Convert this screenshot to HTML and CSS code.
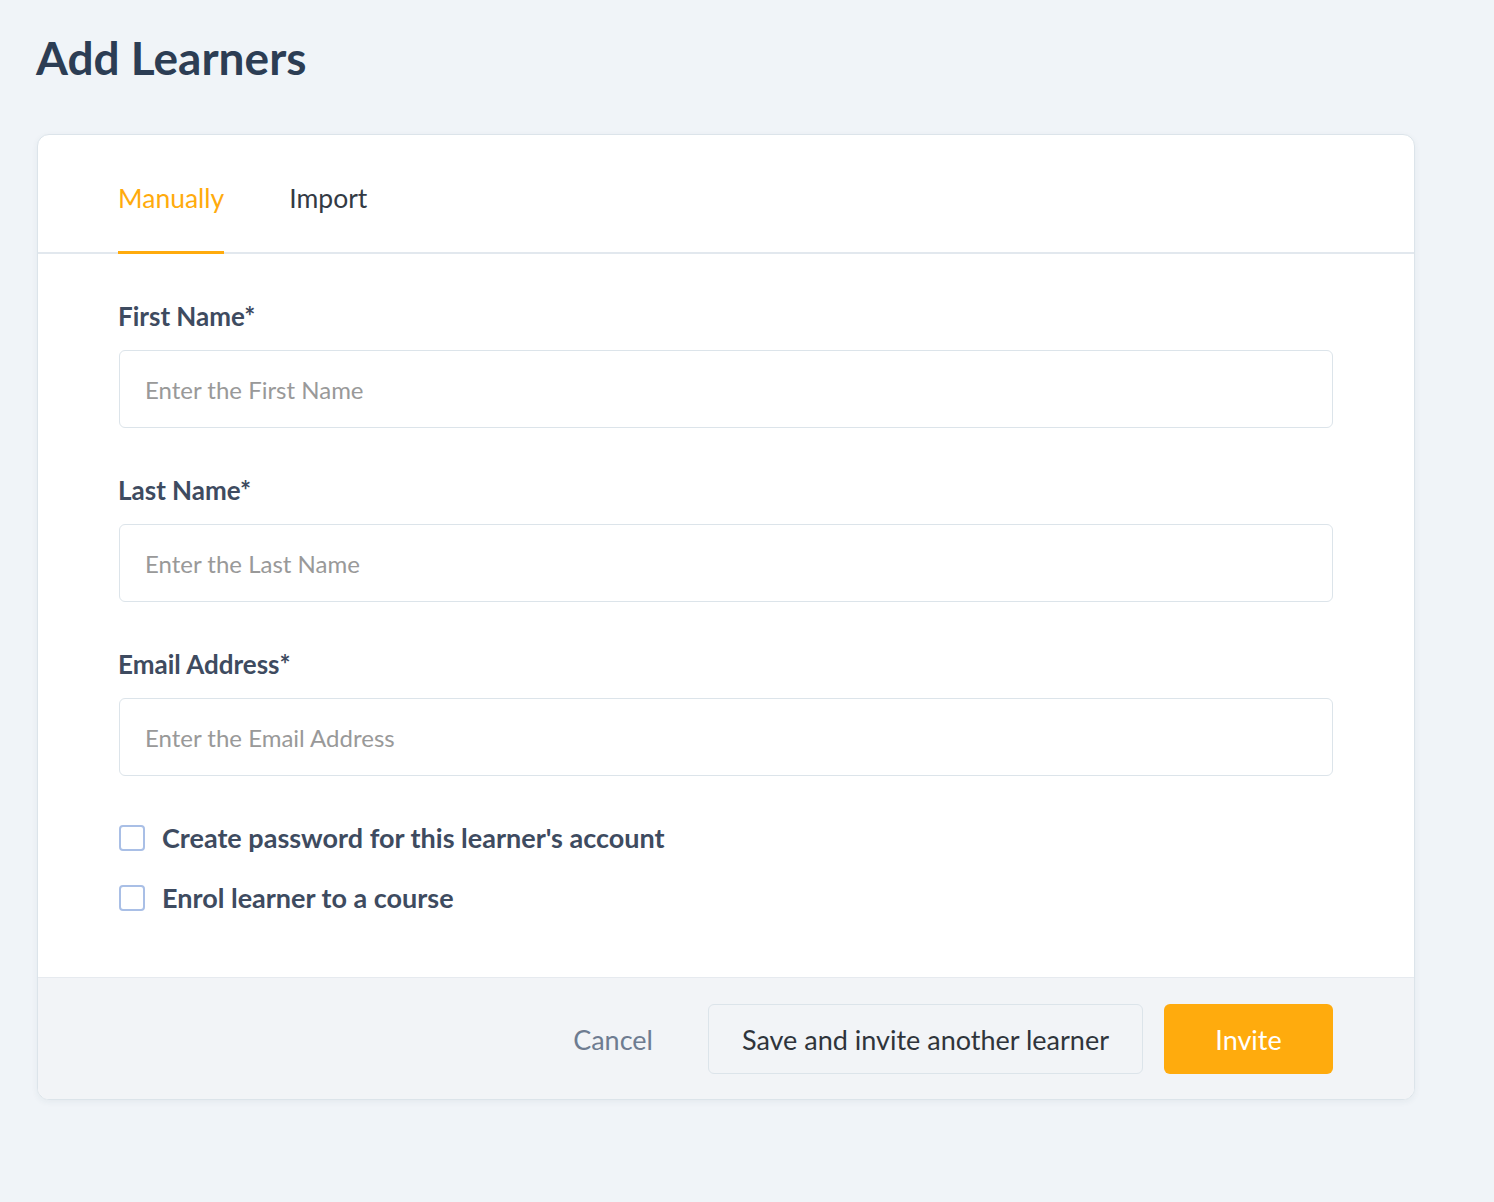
FILE: index.html
```
<!DOCTYPE html>
<html lang="en">
<head>
    <meta charset="UTF-8">
    <title>Add Learners</title>
    <link rel="stylesheet" href="styles.css">
</head>
<body>
    <div class="page">
        <h1 class="page-title">Add Learners</h1>

        <div class="card">
            <div class="tabs">
                <a class="tab active" href="#">Manually</a>
                <a class="tab" href="#">Import</a>
            </div>

            <form class="learner-form">
                <div class="field">
                    <label for="first-name">First Name*</label>
                    <input id="first-name" type="text" placeholder="Enter the First Name">
                </div>
                <div class="field">
                    <label for="last-name">Last Name*</label>
                    <input id="last-name" type="text" placeholder="Enter the Last Name">
                </div>
                <div class="field">
                    <label for="email">Email Address*</label>
                    <input id="email" type="email" placeholder="Enter the Email Address">
                </div>

                <div class="options">
                    <label class="check">
                        <input type="checkbox">
                        <span>Create password for this learner's account</span>
                    </label>
                    <label class="check">
                        <input type="checkbox">
                        <span>Enrol learner to a course</span>
                    </label>
                </div>
            </form>

            <div class="card-footer">
                <button class="btn btn-link" type="button">Cancel</button>
                <button class="btn btn-secondary" type="button">Save and invite another learner</button>
                <button class="btn btn-primary" type="button">Invite</button>
            </div>
        </div>
    </div>
</body>
</html>
```

FILE: styles.css
```
:root {
    --orange: #ffab0d;
    --heading: #2c3d54;
    --label: #3e4b60;
    --border: #dce4ea;
    --footer-bg: #f2f4f7;
    --page-bg: #f0f4f8;
}
body {
    margin: 0;
    background-color: var(--page-bg);
    font-family: 'Lato', 'Noto Sans', sans-serif;
    color: #333a44;
}
.page {
    padding: 30px 37px 60px;
}
.page-title {
    margin: 0 0 48px -1px;
    font-size: 46px;
    line-height: 56px;
    font-weight: 700;
    color: var(--heading);
}
.card {
    width: 1378px;
    box-sizing: border-box;
    background-color: white;
    border: 1px solid var(--border);
    border-radius: 12px;
    box-shadow: 0 2px 6px rgba(40, 60, 80, 0.06);
    overflow: hidden;
}
.tabs {
    display: flex;
    gap: 65px;
    padding: 0 80px;
    border-bottom: 2px solid #e2e8ee;
}
.tab {
    padding: 48px 0 38px;
    margin-bottom: -2px;
    font-size: 26.5px;
    line-height: 30px;
    color: #333a44;
    text-decoration: none;
    border-bottom: 3px solid transparent;
}
.tab.active {
    color: var(--orange);
    border-bottom-color: var(--orange);
}
.learner-form {
    padding: 47px 81px 64px 80px;
}
.field {
    display: flex;
    flex-direction: column;
    gap: 19px;
    margin-bottom: 47px;
}
.field label {
    font-size: 26px;
    line-height: 30px;
    font-weight: 700;
    color: var(--label);
}
.field input {
    height: 78px;
    box-sizing: border-box;
    margin: 0 0 0 1px;
    padding: 0 25px;
    border: 1px solid var(--border);
    border-radius: 6px;
    font-family: inherit;
    font-size: 24px;
    color: #333a44;
    outline: none;
}
.field input::placeholder {
    color: #999999;
}
.options {
    display: flex;
    flex-direction: column;
    gap: 30px;
}
.check {
    display: flex;
    align-items: center;
    gap: 17px;
    font-size: 27px;
    line-height: 30px;
    font-weight: 700;
    color: var(--label);
    cursor: pointer;
}
.check input {
    appearance: none;
    width: 26px;
    height: 26px;
    margin: 0 0 0 1px;
    border: 2px solid #a9bfe6;
    border-radius: 4px;
    background-color: white;
}
.card-footer {
    display: flex;
    justify-content: flex-end;
    align-items: center;
    gap: 21px;
    padding: 26px 81px 25px;
    background-color: var(--footer-bg);
    border-top: 1px solid #e6eaef;
}
.btn {
    height: 70px;
    box-sizing: border-box;
    font-family: inherit;
    font-size: 27px;
    border-radius: 6px;
    cursor: pointer;
}
.btn-link {
    margin-right: 34px;
    padding: 0;
    border: none;
    background: none;
    color: #6e7c91;
}
.btn-secondary {
    padding: 0 33px;
    border: 1px solid var(--border);
    background-color: var(--footer-bg);
    color: #2f343b;
}
.btn-primary {
    min-width: 169px;
    padding: 0 30px;
    border: none;
    background-color: var(--orange);
    color: white;
}
```
